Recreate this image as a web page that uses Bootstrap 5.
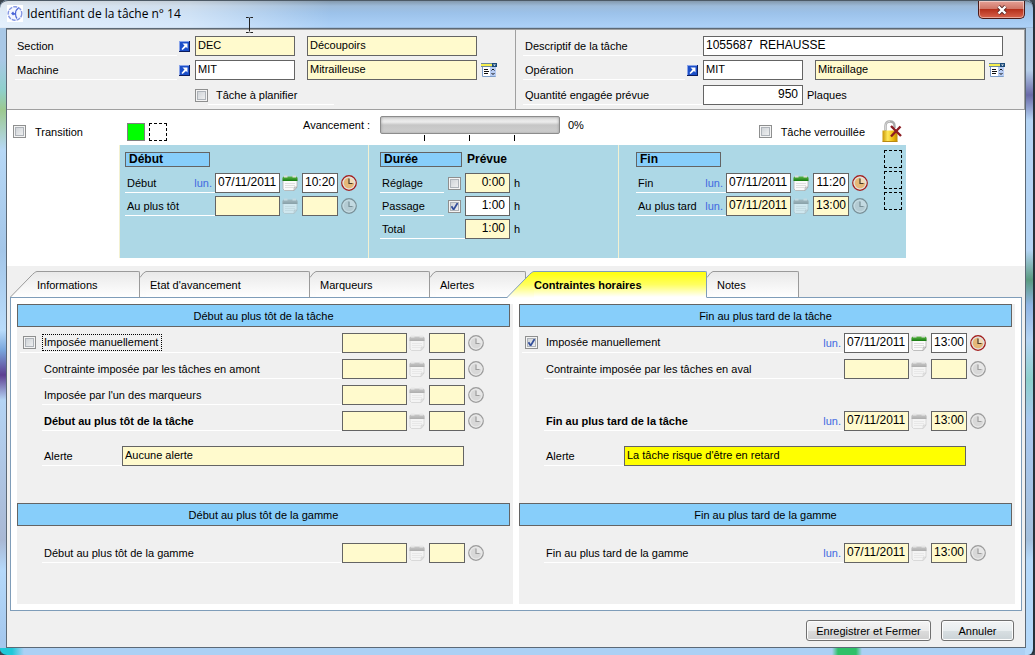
<!DOCTYPE html>
<html lang="fr">
<head>
<meta charset="utf-8">
<meta name="viewport" content="width=device-width, initial-scale=1">
<title>Identifiant de la tâche n° 14</title>
<link href="https://cdn.jsdelivr.net/npm/bootstrap@5.3.0/dist/css/bootstrap.min.css" rel="stylesheet">
<style>
:root { --face: #f0f0f0; --line: #646464; --cream: #fffacd; --sky: #87cefa; --pale: #add8e6; }
body { font: 11px/16px "Liberation Sans", Arial, sans-serif; color: #000; background: #3c4650; }
label, .lbl { color: #000; }

/* window frame */
.win {
  min-height: 100vh; padding: 0 7px 7px 6px; border-right: 2px solid #27313a; border-bottom: 1px solid #27313a;
  border-radius: 8px 8px 7px 7px;
  background:
    linear-gradient(90deg, transparent 832px, #2fc068 838px, #2fc068 856px, transparent 862px) bottom / 100% 7px no-repeat,
    linear-gradient(90deg, #1fc8d8 12px, transparent 24px) bottom / 100% 7px no-repeat,
    linear-gradient(#a9c8e6 0, #a9c8e6 60px, #8fd0cc 90px, #9cc98f 110px, #b7d8f6 150px, #a4c6e8 250px, #b9dcfb 330px, #7aa6dc 350px, #5c3f92 375px, #b4d4f4 400px, #a9b8d4 540px, #b5d9fa 570px, #a5c8ee 640px) left / 6px 100% no-repeat,
    linear-gradient(#a9c8e6 0, #b7d0ea 70px, #6a6aa8 95px, #b4d4f4 120px, #b4d4f4 250px, #5a9a80 280px, #8fb4e4 305px, #b4d4f4 340px, #8cd0cc 380px, #a9c8f0 420px, #a4c0dd 540px, #b5d9fa 560px) right / 8px 100% no-repeat,
    #acd0f4;
}
.titlebar {
  height: 28px; margin: 0 -7px 0 -6px; padding: 0 8px 0 7px; border-radius: 8px 8px 0 0; border-top: 1px solid #4d5a66;
  background: linear-gradient(90deg, #ffffffb0, #ffffff80 190px, #ffffff00 330px) , linear-gradient(#8499ad, #9dbbda 5px, #9cc2ea 12px, #acd1f8 26px, #8fa9c4);
}
.wintitle { font: 12px/26px "Open Sans", sans-serif; }
.closebtn {
  width: 47px; height: 18px; border: 1px solid #4a1a18; border-top: 0; border-radius: 0 0 5px 5px; padding: 0;
  background: linear-gradient(#e5a196, #d07768 45%, #b5301c 50%, #d8634c); box-shadow: inset 0 0 0 1px #ffffff70;
}
.client { border: 1px solid #5c6976; background: #fff; }
.ibeam { position: absolute; left: 245px; top: 16px; }

/* fields */
.fld { height: 20px; border: 1px solid var(--line); background: #fff; padding: 0 2px 2px; border-radius: 0; min-width: 0; color: #000; line-height: 16px; }
.fld[readonly] { background: var(--cream); }
.fld:focus { outline: 1px dotted #000; }
.num { font-size: 12px; }
.w-code { width: 100px; } .w-date { width: 65px; } .w-time { width: 36px; } .w-dur { width: 45px; }
.ul { height: 20px; border-bottom: 1px solid #fff; padding-left: 2px; line-height: 20px; white-space: nowrap; }
.day { color: #4169e1; padding-right: 3px; }
.icon-btn { border: 0; background: none; padding: 0; line-height: 0; display: inline-flex; align-items: center; justify-content: center; }
.icon-btn:disabled { filter: grayscale(1); opacity: .45; }
.cal { width: 22px; padding-right: 2px; }
.clk { width: 16px; margin-left: 3px; }
.tick { appearance: none; width: 13px; height: 13px; margin: 0; flex: none; border: 1px solid #8e8f8f; box-shadow: inset 0 0 0 1px #f4f4f4, inset 0 0 0 2px #aeb3b9; background: linear-gradient(135deg, #c8cdd2, #f6f6f6); }
.tick:checked { background: url("data:image/svg+xml,%3Csvg xmlns='http://www.w3.org/2000/svg' viewBox='0 0 11 11'%3E%3Cpath d='M2.5 5.2 4.6 8.6 8.6 2' fill='none' stroke='%23344f9b' stroke-width='1.8'/%3E%3C/svg%3E") center / 11px 11px, linear-gradient(135deg, #c8cdd2, #f6f6f6); }

/* top panel */
.toppanel { background: var(--face); border: 1px solid #a0a0a0; border-left: 0; }
.half { flex: 1 1 0; min-width: 0; padding: 6px 8px 4px; }
.half + .half { border-left: 1px solid #a0a0a0; padding: 6px 9px 4px 7px; }
.half .stack { gap: 4px; }
.half .sec { margin-left: 12px; }
.caption-col { flex: 0 0 162px; }
.caption-wide { flex: 0 0 180px; }
.arrow { width: 18px; padding-right: 4px; }
.listbtn { width: 16px; margin: 0 10px 0 4px; }
.descfld { margin-right: 12px; }
.thirdrow { margin-top: 1px; }
.planrow { padding-left: 180px; }
.planrow .ul { width: 126px; }
.unit { line-height: 20px; }

/* progress strip */
.strip { height: 35px; }
.strip-left { flex: 0 0 296px; padding-left: 6px; }
.translbl { padding-left: 9px; flex: 0 0 101px; }
.swatch { width: 18px; height: 18px; flex: none; }
.lit { background: #0f0; border: 1px solid #808080; }
.dash { border: 1px dashed #000; }
.avlbl { flex: 0 0 77px; padding-top: 7px; }
.barwrap { padding-top: 6px; }
.bar { width: 180px; height: 18px; border: 1px solid #8c8c8c; border-radius: 2px; background: linear-gradient(#dedede, #ececec 5px, #c6c6c6 8px, #cbcbcb 13px, #d6d6d6); box-shadow: inset 0 0 3px #9a9a9a; }
.marks { height: 6px; margin: 1px 0 0 44px; width: 91px; border: solid #000; border-width: 0 1px; background: linear-gradient(#000, #000) center / 1px 6px no-repeat; }
.pct { padding: 7px 0 0 8px; }
.lockgrp { margin-right: 123px; }
.locklbl { padding: 0 17px 0 9px; }

/* schedule panel */
.sched { display: grid; grid-template-columns: 249fr 250fr 288fr; background: var(--pale); margin: 0 119px 8px 112px; height: 113px; }
.sched > div { border-left: 1px solid #f3f1d2; padding-top: 7px; min-width: 0; }
.sched-a { padding-left: 5px; }
.sched-b { padding-left: 11px; }
.sched-c { padding-left: 17px; }
.head { height: 15px; border: 1px solid var(--line); background: var(--sky); font-weight: bold; font-size: 12px; line-height: 13px; padding-left: 3px; width: 85px; }
.stack3 { display: flex; flex-direction: column; gap: 3px; margin-top: 6px; }
.w90 { width: 90px; } .w64 { width: 64px; } .w82 { width: 82px; } .w85 { width: 85px; }
.boxes { gap: 3px; margin: -2px 4px 0 0; }
.prevue { font-size: 12px; line-height: 14px; padding-left: 5px; }

/* tabs */
.tabs { background: var(--face); padding: 5px 3px 0; }
.tabs .nav-link { display: flex; height: 27px; padding: 0; color: #000; border: 0; position: relative; z-index: 1; margin-bottom: -1px; line-height: 27px; }
.tabs .face { border: solid #9a9a9a; border-width: 1px 1px 0 0; border-radius: 0 2px 0 0; background: linear-gradient(#e9e9e9, #fff); border-bottom: 1px solid #7f9db9; flex: 1; line-height: 26px; }
.tabs .corner { width: 6px; flex: none; } .tabs .corner + .face { padding-left: 4px; }
.tabs .slant { width: 27px; flex: none; }
.tabs .active { z-index: 2; margin-left: -19px; font-weight: bold; }
.tabs .active .face { background: linear-gradient(#ffff0c, #ffff60 50%, #fff); border-color: #7f9db9; border-bottom-color: #fff; }
.t1 { width: 130px; } .t2 { width: 170px; } .t3 { width: 120px; } .t4 { width: 96px; } .t5 { width: 200px; } .t6 { width: 92px; }
.facewrap { background: var(--face); }
.tabpage { border: 1px solid #7f9db9; margin: 0 3px; padding: 6px; gap: 6px; background: #fff; }
.pane { background: var(--face); flex: 1 1 0; min-width: 0; padding-bottom: 41px; }
.bandhead { height: 23px; border: 1px solid var(--line); background: var(--sky); text-align: center; line-height: 22px; margin-right: 3px; font-size: 11px; font-weight: normal; }
.rows { padding: 6px 29px 0 25px; display: flex; flex-direction: column; gap: 6px; }
.gap-alert { margin-top: 9px; }
.alertrow { margin-right: 20px; }
.alertlbl { flex: 0 0 80px; }
.blankrow { height: 20px; }
.rows .withbox { margin-left: -22px; }
.withbox .ul { padding-left: 3px; gap: 7px; }
.withbox label { line-height: 15px; padding: 0 3px 0 1px; }
.focused { outline: 1px dotted #000; }
.fld.alertmsg { background: #ff0; }
.band2 { margin-top: 37px; }
.rows2 { padding-top: 17px; }

/* footer */
.foot { background: var(--face); padding: 9px 11px 6px; gap: 10px; }
.cmd { height: 21px; border: 1px solid #707070; border-radius: 3px; background: linear-gradient(#f4f4f4, #ebebeb 50%, #dcdcdc 50%, #cfcfcf); padding: 0; box-shadow: inset 0 0 0 1px #fcfcfc; }
.cmd-a { width: 125px; } .cmd-b { width: 73px; background: linear-gradient(#f2f4f5, #e8edef 50%, #d8dfe2 50%, #cbd3d7); }
</style>
</head>
<body>
<svg width="0" height="0" class="position-absolute" aria-hidden="true">
  <defs>
    <linearGradient id="gGold" x1="0" x2="1"><stop offset="0" stop-color="#c89404"/><stop offset=".35" stop-color="#ffe85a"/><stop offset=".7" stop-color="#edbc10"/><stop offset="1" stop-color="#c08a00"/></linearGradient>
    <linearGradient id="gGreen" x1="0" x2="0" y1="0" y2="1"><stop offset="0" stop-color="#5fb848"/><stop offset="1" stop-color="#157a10"/></linearGradient>
    <linearGradient id="gTab" x1="0" x2="0" y1="0" y2="1"><stop offset="0" stop-color="#e9e9e9"/><stop offset="1" stop-color="#fff"/></linearGradient>
    <linearGradient id="gYel" x1="0" x2="0" y1="0" y2="1"><stop offset="0" stop-color="#ffff0c"/><stop offset=".5" stop-color="#ffff60"/><stop offset="1" stop-color="#fff"/></linearGradient>
  </defs>
  <symbol id="cal" viewBox="0 0 16 16"><path d="M1 3h14v9l-3 3.500H2.500L1 14z" fill="#fafafa" stroke="#b0b0b0" stroke-width=".8"/><path d="M.5 3Q.5 1.500 2 1.500h12q1.500 0 1.500 1.500V6H.5z" fill="url(#gGreen)"/><path d="M2 1.500h3.500M10.500 1.500H14" stroke="#dcdcdc" stroke-width="1.800"/><path d="M3.500 8.500h9M3.500 10.500h9M3.500 12.500h7" stroke="#c4c4c4" stroke-dasharray="1 1"/><path d="M15 12h-3v3.500z" fill="#ddd" stroke="#999" stroke-width=".5"/></symbol>
  <symbol id="clock" viewBox="0 0 16 16"><circle cx="8" cy="8" r="7.200" fill="#f1dcb6" stroke="#a31f1f" stroke-width="1.400"/><circle cx="8" cy="8" r="5.900" fill="none" stroke="#dedede" stroke-width="1.200"/><path d="M8 8h5.200A5.200 5.200 0 1 1 8 2.800z" fill="#e5b878"/><path d="M8 3.500V8.500h3.500" fill="none" stroke="#4b3a2a" stroke-width="1.200"/></symbol>
  <symbol id="go" viewBox="0 0 11 11"><path d="M0 0h11v11H0z" fill="#0c1c5c"/><path d="M0 0h10v10H0z" fill="#8aa4e8"/><path d="M1 1h9v9H1z" fill="#1c4fc8"/><path d="M3.500 2.500h5v5L7 6 3.500 9 2.500 8 5.500 4.500z" fill="#fff"/></symbol>
  <symbol id="list" viewBox="0 0 16 14"><path d="M1.500 2.500h13v11h-13z" fill="#fff" stroke="#7b9cc8"/><path d="M0 0h12v3H0z" fill="#f5ee4e"/><path d="M0 .5h12M0 3.500h12" stroke="#6d8a9c"/><path d="M11 0h5v4h-5z" fill="#1b4a78"/><path d="M12 1.500h3l-1.500 1.500z" fill="#fff"/><path d="M9 4h6v9H9z" fill="#b8cdf4"/><path d="M3 6.500h4M3 8.500h5M3 10.500h4" stroke="#111"/><path d="m10.500 7.500 1.500-1.500 1.500 1.500M10.500 10l1.500 1.500L13.500 10" fill="none" stroke="#111"/></symbol>
  <symbol id="slantG" viewBox="0 0 27 27"><path d="M0 26.500 20 6Q25 .5 27 .5V26.500z" fill="url(#gTab)"/><path d="M0 26.500 20 6Q25 .5 27 .5" fill="none" stroke="#9a9a9a"/><path d="M0 26.500h27" stroke="#7f9db9"/></symbol>
  <symbol id="slantY" viewBox="0 0 27 27"><path d="M0 27 20 6Q25 .5 27 .5V27z" fill="url(#gYel)"/><path d="M0 26.500 20 6Q25 .5 27 .5" fill="none" stroke="#7f9db9"/></symbol>
  <symbol id="cornerG" viewBox="0 0 6 27"><path d="M0 6.500Q4 .5 6 .5V27H0z" fill="url(#gTab)"/><path d="M0 6.500Q4 .5 6 .5" fill="none" stroke="#9a9a9a"/><path d="M0 26.500h6" stroke="#7f9db9"/></symbol>
</svg>

<div class="win position-relative">
  <header class="titlebar d-flex align-items-start">
    <svg class="me-1 mt-1" width="16" height="17" viewBox="0 0 16 17"><path d="M0 0h16v17H0z" fill="#fff"/><circle cx="8" cy="8.500" r="6.800" fill="#f4f7ff" stroke="#8497e4" stroke-width="1.400" stroke-dasharray="4 1"/><path d="M11.500 3Q8.500 5 8.500 8.500T10 13.500" fill="none" stroke="#5068d8" stroke-width="1.200"/><path d="M8.500 9 5 8.500M6.500 7 5 8.500l1.500 1.500" fill="none" stroke="#4a64d8" stroke-width="1.300"/></svg>
    <span class="wintitle">Identifiant de la tâche n° 14</span>
    <button type="button" class="closebtn ms-auto" aria-label="Fermer"><svg width="12" height="10" viewBox="0 0 12 10" class="d-block mx-auto"><path d="m2.500 1.500 7 7m0-7-7 7" stroke="#5a2a28" stroke-width="4"/><path d="m2.500 1.500 7 7m0-7-7 7" stroke="#fff" stroke-width="2.400"/></svg></button>
  </header>
  <svg class="ibeam" width="9" height="17" viewBox="0 0 9 17" aria-hidden="true"><path d="M1 1.500h2.500L4.500 2l1-.5H8M4.500 2v13M1 16.500h2.500l1-.5 1 .5H8" fill="none" stroke="#222"/></svg>

  <main class="client">
    <section class="toppanel d-flex">
      <div class="half">
        <div class="stack d-flex flex-column">
          <div class="d-flex">
            <label class="caption-col ul" for="section">Section</label>
            <button type="button" class="icon-btn arrow" aria-label="Ouvrir la section"><svg width="11" height="11"><use href="#go"/></svg></button>
            <input id="section" class="fld w-code" value="DEC" readonly>
            <input class="fld flex-grow-1 sec" value="Découpoirs" readonly aria-label="Nom de la section">
            <span class="listbtn"></span>
          </div>
          <div class="d-flex">
            <label class="caption-col ul" for="machine">Machine</label>
            <button type="button" class="icon-btn arrow" aria-label="Ouvrir la machine"><svg width="11" height="11"><use href="#go"/></svg></button>
            <input id="machine" class="fld w-code" value="MIT">
            <input class="fld flex-grow-1 sec" value="Mitrailleuse" readonly aria-label="Nom de la machine">
            <button type="button" class="icon-btn listbtn" aria-label="Liste des machines"><svg width="16" height="14"><use href="#list"/></svg></button>
          </div>
          <div class="d-flex align-items-center planrow thirdrow">
            <input type="checkbox" id="plan" class="tick"><label for="plan" class="ul ps-2">Tâche à planifier</label>
          </div>
        </div>
      </div>
      <div class="half">
        <div class="stack d-flex flex-column">
          <div class="d-flex">
            <label class="caption-wide ul" for="desc">Descriptif de la tâche</label>
            <input id="desc" class="fld flex-grow-1 num descfld" value="1055687  REHAUSSE">
          </div>
          <div class="d-flex">
            <label class="caption-col ul" for="oper">Opération</label>
            <button type="button" class="icon-btn arrow" aria-label="Ouvrir l'opération"><svg width="11" height="11"><use href="#go"/></svg></button>
            <input id="oper" class="fld w-code" value="MIT">
            <input class="fld flex-grow-1 sec" value="Mitraillage" readonly aria-label="Nom de l'opération">
            <button type="button" class="icon-btn listbtn" aria-label="Liste des opérations"><svg width="16" height="14"><use href="#list"/></svg></button>
          </div>
          <div class="d-flex thirdrow">
            <label class="caption-wide ul" for="qte">Quantité engagée prévue</label>
            <input id="qte" class="fld w-code num text-end pe-1" value="950">
            <span class="lbl unit ps-1">Plaques</span>
          </div>
        </div>
      </div>
    </section>

    <section class="strip d-flex">
      <div class="strip-left d-flex align-items-center pt-2">
        <input type="checkbox" class="tick" id="trans"><label for="trans" class="translbl">Transition</label>
        <span class="swatch lit"></span><span class="swatch dash ms-1"></span>
      </div>
      <span class="avlbl">Avancement :</span>
      <div class="barwrap">
        <div class="bar" role="progressbar" aria-label="Avancement" aria-valuenow="0" aria-valuemin="0" aria-valuemax="100"></div>
        <div class="marks"></div>
      </div>
      <span class="pct">0%</span>
      <div class="lockgrp d-flex align-items-center ms-auto pt-2">
        <input type="checkbox" class="tick" id="lock"><label for="lock" class="locklbl">Tâche verrouillée</label>
        <svg width="20" height="23" viewBox="0 0 20 23"><path d="M3.500 11V6Q3.500 1.500 8 1.500T12.500 6v2" fill="none" stroke="#a9a9a9" stroke-width="2.400"/><path d="M3.500 10V6Q3.500 1.500 8 1.500" fill="none" stroke="#d8d8d8" stroke-width="1"/><path d="M.5 10.500h15v11H.5z" fill="url(#gGold)"/><path d="M.5 21.500h15" stroke="#b98a10"/><path d="m9 6 10 10M18.500 6.500 9 16.500" stroke="#8c1c22" stroke-width="2.400"/></svg>
      </div>
    </section>

    <section class="sched">
      <div class="sched-a">
        <div class="head">Début</div>
        <div class="stack3">
          <div class="d-flex"><label class="ul w90 d-flex justify-content-between" for="d1">Début<span class="day">lun.</span></label><input id="d1" class="fld num w-date" value="07/11/2011"><button type="button" class="icon-btn cal" aria-label="Calendrier"><svg width="16" height="16"><use href="#cal"/></svg></button><input class="fld num w-time text-center" value="10:20" aria-label="Heure"><button type="button" class="icon-btn clk" aria-label="Horloge"><svg width="16" height="16"><use href="#clock"/></svg></button></div>
          <div class="d-flex"><label class="ul w90" for="d2">Au plus tôt</label><input id="d2" class="fld num w-date" readonly><button type="button" disabled class="icon-btn cal" aria-label="Calendrier"><svg width="16" height="16"><use href="#cal"/></svg></button><input class="fld num w-time" readonly aria-label="Heure"><button type="button" disabled class="icon-btn clk" aria-label="Horloge"><svg width="16" height="16"><use href="#clock"/></svg></button></div>
        </div>
      </div>
      <div class="sched-b">
        <div class="d-flex"><div class="head w82">Durée</div><b class="prevue">Prévue</b></div>
        <div class="stack3">
          <div class="d-flex align-items-center"><label class="ul w64" for="reg">Réglage</label><input type="checkbox" class="tick mx-1" aria-label="Réglage"><input id="reg" class="fld num w-dur text-end pe-1" value="0:00" readonly><span class="ps-1">h</span></div>
          <div class="d-flex align-items-center"><label class="ul w64" for="pas">Passage</label><input type="checkbox" class="tick mx-1" checked aria-label="Passage"><input id="pas" class="fld num w-dur text-end pe-1" value="1:00"><span class="ps-1">h</span></div>
          <div class="d-flex align-items-center"><label class="ul w85" for="tot">Total</label><input id="tot" class="fld num w-dur text-end pe-1" value="1:00" readonly><span class="ps-1">h</span></div>
        </div>
      </div>
      <div class="sched-c d-flex justify-content-between">
        <div>
          <div class="head">Fin</div>
          <div class="stack3">
            <div class="d-flex"><label class="ul w90 d-flex justify-content-between" for="f1">Fin<span class="day">lun.</span></label><input id="f1" class="fld num w-date" value="07/11/2011"><button type="button" class="icon-btn cal" aria-label="Calendrier"><svg width="16" height="16"><use href="#cal"/></svg></button><input class="fld num w-time text-center" value="11:20" aria-label="Heure"><button type="button" class="icon-btn clk" aria-label="Horloge"><svg width="16" height="16"><use href="#clock"/></svg></button></div>
            <div class="d-flex"><label class="ul w90 d-flex justify-content-between" for="f2">Au plus tard<span class="day">lun.</span></label><input id="f2" class="fld num w-date" value="07/11/2011" readonly><button type="button" disabled class="icon-btn cal" aria-label="Calendrier"><svg width="16" height="16"><use href="#cal"/></svg></button><input class="fld num w-time text-center" value="13:00" readonly aria-label="Heure"><button type="button" disabled class="icon-btn clk" aria-label="Horloge"><svg width="16" height="16"><use href="#clock"/></svg></button></div>
          </div>
        </div>
        <div class="boxes d-flex flex-column"><span class="swatch dash"></span><span class="swatch dash"></span><span class="swatch dash"></span></div>
      </div>
    </section>

    <nav class="tabs nav flex-nowrap">
      <a class="nav-link t1" href="#"><svg class="slant" height="27"><use href="#slantG"/></svg><span class="face">Informations</span></a>
      <a class="nav-link t2" href="#"><svg class="corner" height="27"><use href="#cornerG"/></svg><span class="face">Etat d'avancement</span></a>
      <a class="nav-link t3" href="#"><svg class="corner" height="27"><use href="#cornerG"/></svg><span class="face">Marqueurs</span></a>
      <a class="nav-link t4" href="#"><svg class="corner" height="27"><use href="#cornerG"/></svg><span class="face">Alertes</span></a>
      <a class="nav-link t5 active" href="#" aria-current="page"><svg class="slant" height="27"><use href="#slantY"/></svg><span class="face">Contraintes horaires</span></a>
      <a class="nav-link t6" href="#"><svg class="corner" height="27"><use href="#cornerG"/></svg><span class="face">Notes</span></a>
    </nav>
    <div class="facewrap">
    <div class="tabpage d-flex">
      <section class="pane">
        <h2 class="bandhead mb-0">Début au plus tôt de la tâche</h2>
        <div class="rows">
          <div class="d-flex withbox"><div class="ul flex-grow-1 d-flex align-items-center"><input type="checkbox" class="tick" id="im1"><label for="im1" class="focused">Imposée manuellement</label></div><input class="fld num w-date" readonly aria-label="Date"><button type="button" disabled class="icon-btn cal" aria-label="Calendrier"><svg width="16" height="16"><use href="#cal"/></svg></button><input class="fld num w-time" readonly aria-label="Heure"><button type="button" disabled class="icon-btn clk" aria-label="Horloge"><svg width="16" height="16"><use href="#clock"/></svg></button></div>
          <div class="d-flex"><label class="ul flex-grow-1" for="l2">Contrainte imposée par les tâches en amont</label><input id="l2" class="fld num w-date" readonly><button type="button" disabled class="icon-btn cal" aria-label="Calendrier"><svg width="16" height="16"><use href="#cal"/></svg></button><input class="fld num w-time" readonly aria-label="Heure"><button type="button" disabled class="icon-btn clk" aria-label="Horloge"><svg width="16" height="16"><use href="#clock"/></svg></button></div>
          <div class="d-flex"><label class="ul flex-grow-1" for="l3">Imposée par l'un des marqueurs</label><input id="l3" class="fld num w-date" readonly><button type="button" disabled class="icon-btn cal" aria-label="Calendrier"><svg width="16" height="16"><use href="#cal"/></svg></button><input class="fld num w-time" readonly aria-label="Heure"><button type="button" disabled class="icon-btn clk" aria-label="Horloge"><svg width="16" height="16"><use href="#clock"/></svg></button></div>
          <div class="d-flex"><label class="ul flex-grow-1 fw-bold" for="l4">Début au plus tôt de la tâche</label><input id="l4" class="fld num w-date" readonly><button type="button" disabled class="icon-btn cal" aria-label="Calendrier"><svg width="16" height="16"><use href="#cal"/></svg></button><input class="fld num w-time" readonly aria-label="Heure"><button type="button" disabled class="icon-btn clk" aria-label="Horloge"><svg width="16" height="16"><use href="#clock"/></svg></button></div>
          <div class="d-flex gap-alert alertrow"><label class="ul alertlbl" for="l5">Alerte</label><input id="l5" class="fld flex-grow-1" value="Aucune alerte" readonly></div>
        </div>
        <h2 class="bandhead band2 mb-0">Début au plus tôt de la gamme</h2>
        <div class="rows rows2">
          <div class="d-flex"><label class="ul flex-grow-1" for="l6">Début au plus tôt de la gamme</label><input id="l6" class="fld num w-date" readonly><button type="button" disabled class="icon-btn cal" aria-label="Calendrier"><svg width="16" height="16"><use href="#cal"/></svg></button><input class="fld num w-time" readonly aria-label="Heure"><button type="button" disabled class="icon-btn clk" aria-label="Horloge"><svg width="16" height="16"><use href="#clock"/></svg></button></div>
        </div>
      </section>
      <section class="pane">
        <h2 class="bandhead mb-0">Fin au plus tard de la tâche</h2>
        <div class="rows">
          <div class="d-flex withbox"><div class="ul flex-grow-1 d-flex align-items-center"><input type="checkbox" class="tick" id="im2" checked><label for="im2">Imposée manuellement</label><span class="day ms-auto">lun.</span></div><input class="fld num w-date" value="07/11/2011" aria-label="Date"><button type="button" class="icon-btn cal" aria-label="Calendrier"><svg width="16" height="16"><use href="#cal"/></svg></button><input class="fld num w-time text-center" value="13:00" aria-label="Heure"><button type="button" class="icon-btn clk" aria-label="Horloge"><svg width="16" height="16"><use href="#clock"/></svg></button></div>
          <div class="d-flex"><label class="ul flex-grow-1" for="r2">Contrainte imposée par les tâches en aval</label><input id="r2" class="fld num w-date" readonly><button type="button" disabled class="icon-btn cal" aria-label="Calendrier"><svg width="16" height="16"><use href="#cal"/></svg></button><input class="fld num w-time" readonly aria-label="Heure"><button type="button" disabled class="icon-btn clk" aria-label="Horloge"><svg width="16" height="16"><use href="#clock"/></svg></button></div>
          <div class="blankrow"></div>
          <div class="d-flex"><label class="ul flex-grow-1 fw-bold d-flex justify-content-between" for="r4">Fin au plus tard de la tâche<span class="day fw-normal">lun.</span></label><input id="r4" class="fld num w-date" value="07/11/2011" readonly><button type="button" disabled class="icon-btn cal" aria-label="Calendrier"><svg width="16" height="16"><use href="#cal"/></svg></button><input class="fld num w-time text-center" value="13:00" readonly aria-label="Heure"><button type="button" disabled class="icon-btn clk" aria-label="Horloge"><svg width="16" height="16"><use href="#clock"/></svg></button></div>
          <div class="d-flex gap-alert alertrow"><label class="ul alertlbl" for="r5">Alerte</label><input id="r5" class="fld flex-grow-1 alertmsg" value="La tâche risque d'être en retard" readonly></div>
        </div>
        <h2 class="bandhead band2 mb-0">Fin au plus tard de la gamme</h2>
        <div class="rows rows2">
          <div class="d-flex"><label class="ul flex-grow-1 d-flex justify-content-between" for="r6">Fin au plus tard de la gamme<span class="day">lun.</span></label><input id="r6" class="fld num w-date" value="07/11/2011" readonly><button type="button" disabled class="icon-btn cal" aria-label="Calendrier"><svg width="16" height="16"><use href="#cal"/></svg></button><input class="fld num w-time text-center" value="13:00" readonly aria-label="Heure"><button type="button" disabled class="icon-btn clk" aria-label="Horloge"><svg width="16" height="16"><use href="#clock"/></svg></button></div>
        </div>
      </section>
    </div>
    </div>
    <footer class="foot d-flex justify-content-end">
      <button type="button" class="cmd cmd-a">Enregistrer et Fermer</button>
      <button type="button" class="cmd cmd-b">Annuler</button>
    </footer>
  </main>
</div>
<script src="https://cdn.jsdelivr.net/npm/bootstrap@5.3.0/dist/js/bootstrap.bundle.min.js"></script>
</body>
</html>
